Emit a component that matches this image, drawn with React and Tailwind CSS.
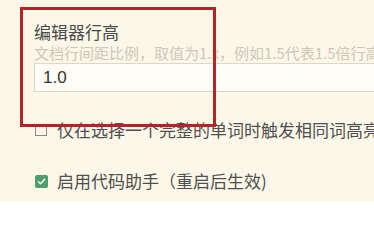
export default function App() {
  return (
    <div
      className="relative w-[374px] h-[201px] overflow-hidden bg-[#fcf7e8]"
      style={{ fontFamily: '"Noto Sans CJK SC", "Noto Sans", sans-serif' }}
    >
      <div className="pl-[34px] pt-[21px]">
        <div className="text-[17px] leading-[22px] text-[#4a4a4a] whitespace-nowrap">编辑器行高</div>
        <div className="text-[15px] leading-[20px] text-[#cdc7b8] whitespace-nowrap">
          文档行间距比例，取值为1.x，例如1.5代表1.5倍行高
        </div>
        <div
          className="mt-0 h-[29px] w-[400px] border border-[#ddd7c5] bg-[#fffdf6] pl-[8px] flex items-center text-[17px] text-[#333]"
          style={{ fontFamily: '"Liberation Sans", Arial, sans-serif' }}
        >
          1.0
        </div>
        <div className="mt-[27px] h-[22px] flex items-center whitespace-nowrap">
          <span className="ml-[1px] w-[12px] h-[12px] border border-[#8a8a80] shrink-0" />
          <span className="ml-[10px] text-[17px] leading-[22px] text-[#4f4f4f]">
            仅在选择一个完整的单词时触发相同词高亮
          </span>
        </div>
        <div className="mt-[29px] h-[22px] flex items-center whitespace-nowrap">
          <span className="ml-[1px] w-[13px] h-[13px] rounded-[2px] bg-[#4e9e6d] shrink-0 flex items-center justify-center">
            <svg width="9" height="9" viewBox="0 0 10 10" fill="none">
              <path d="M1.5 5.2 L4 7.5 L8.5 2.5" stroke="#fff" strokeWidth="1.6" strokeLinecap="round" strokeLinejoin="round" />
            </svg>
          </span>
          <span className="ml-[9px] text-[17px] leading-[22px] text-[#4f4f4f]">启用代码助手（重启后生效)</span>
        </div>
      </div>
      <div className="absolute left-[20px] top-[7px] w-[196px] h-[120px] border-[3px] border-[#b42426]" />
    </div>
  );
}
